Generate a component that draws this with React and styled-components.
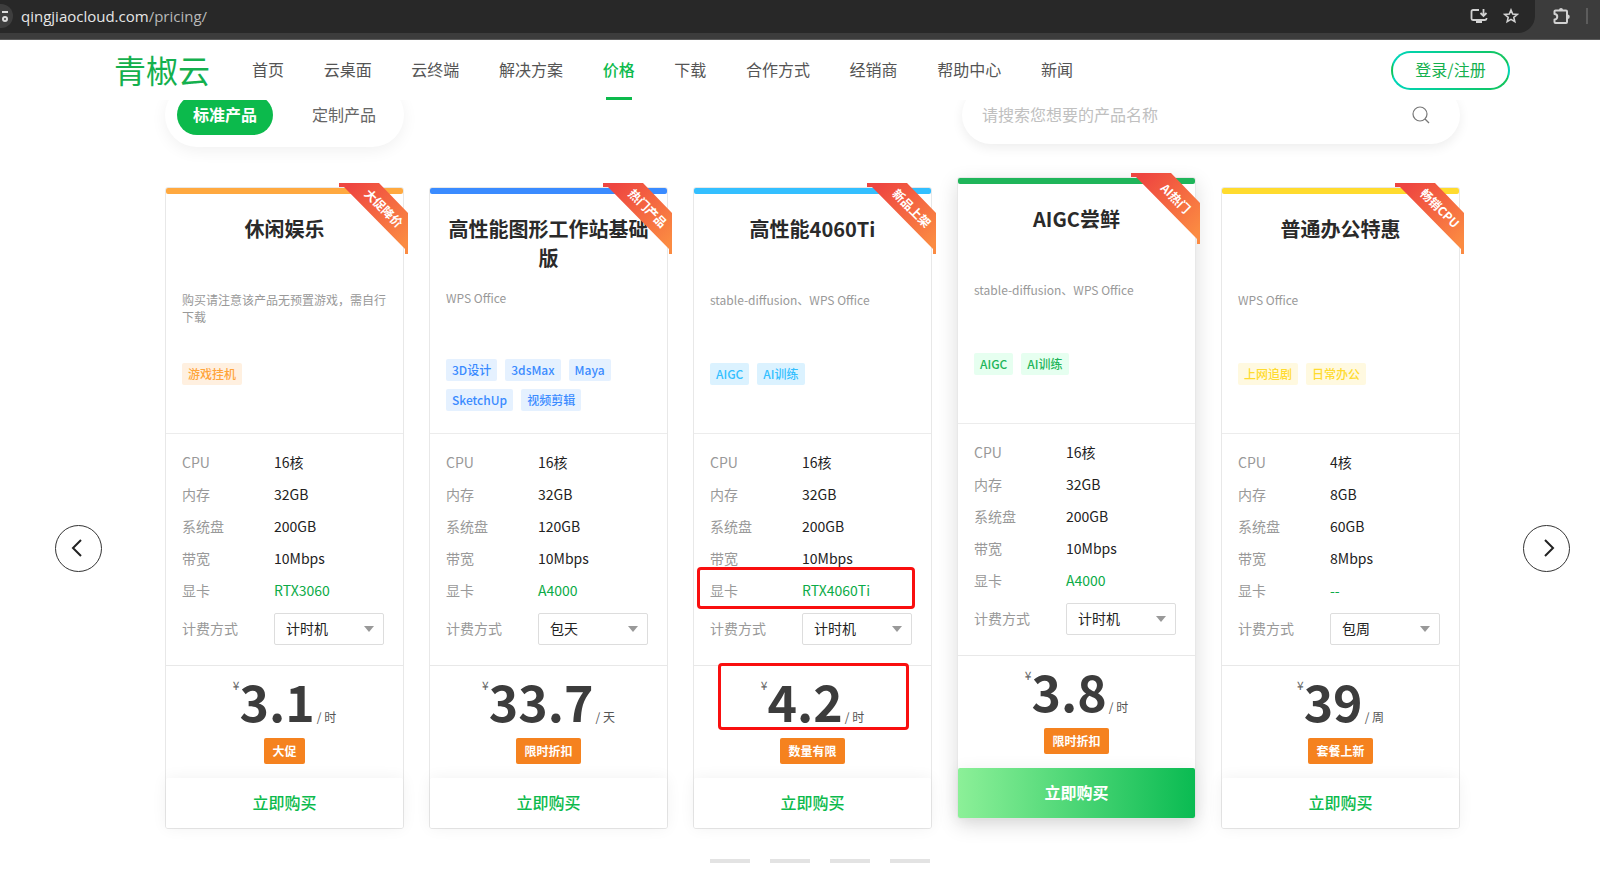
import React, { useState } from "react";
import styled, { createGlobalStyle, css } from "styled-components";

const navItems = [
  "首页",
  "云桌面",
  "云终端",
  "解决方案",
  "价格",
  "下载",
  "合作方式",
  "经销商",
  "帮助中心",
  "新闻",
];

const themes = {
  orange: { bar: "#ffa940", text: "#ffa43a", tint: "#fff0e0" },
  blue: { bar: "#3a8bff", text: "#3a8bff", tint: "#e5f1ff" },
  cyan: { bar: "#33bfff", text: "#33bfff", tint: "#dbf2ff" },
  green: { bar: "#1fb55a", text: "#1fb55a", tint: "#e6fff0" },
  yellow: { bar: "#ffdb2e", text: "#ffdb2e", tint: "#fff9e0" },
};

const products = [
  {
    id: "game",
    theme: "orange",
    title: "休闲娱乐",
    ribbon: "大促降价",
    desc: "购买请注意该产品无预置游戏，需自行下载",
    tags: ["游戏挂机"],
    specs: ["16核", "32GB", "200GB", "10Mbps", "RTX3060"],
    billing: "计时机",
    price: "3.1",
    unit: "时",
    promo: "大促",
  },
  {
    id: "graphics",
    theme: "blue",
    title: "高性能图形工作站基础版",
    ribbon: "热门产品",
    desc: "WPS Office",
    tags: ["3D设计", "3dsMax", "Maya", "SketchUp", "视频剪辑"],
    specs: ["16核", "32GB", "120GB", "10Mbps", "A4000"],
    billing: "包天",
    price: "33.7",
    unit: "天",
    promo: "限时折扣",
  },
  {
    id: "rtx4060ti",
    theme: "cyan",
    title: "高性能4060Ti",
    ribbon: "新品上架",
    desc: "stable-diffusion、WPS Office",
    tags: ["AIGC", "AI训练"],
    specs: ["16核", "32GB", "200GB", "10Mbps", "RTX4060Ti"],
    billing: "计时机",
    price: "4.2",
    unit: "时",
    promo: "数量有限",
    marked: true,
  },
  {
    id: "aigc",
    theme: "green",
    title: "AIGC尝鲜",
    ribbon: "AI热门",
    desc: "stable-diffusion、WPS Office",
    tags: ["AIGC", "AI训练"],
    specs: ["16核", "32GB", "200GB", "10Mbps", "A4000"],
    billing: "计时机",
    price: "3.8",
    unit: "时",
    promo: "限时折扣",
    raised: true,
  },
  {
    id: "office",
    theme: "yellow",
    title: "普通办公特惠",
    ribbon: "畅销CPU",
    desc: "WPS Office",
    tags: ["上网追剧", "日常办公"],
    specs: ["4核", "8GB", "60GB", "8Mbps", "--"],
    billing: "包周",
    price: "39",
    unit: "周",
    promo: "套餐上新",
  },
];

const specLabels = ["CPU", "内存", "系统盘", "带宽", "显卡"];
const billingOptions = ["计时机", "包天", "包周"];

function Ribbon({ id, text }) {
  return (
    <RibbonBox>
      <svg width="69" height="71" viewBox="0 0 69 71" aria-hidden="true">
        <defs>
          <linearGradient id={`ribbon-${id}`} x1="0" y1="0" x2="1" y2="1">
            <stop offset="0.1" stopColor="#ee4540" />
            <stop offset="0.9" stopColor="#fb8b42" />
          </linearGradient>
        </defs>
        <polygon
          points="0,0 40,0 69,30 69,71 66,71 66,66 5,4 0,4"
          fill={`url(#ribbon-${id})`}
        />
      </svg>
      <RibbonText>{text}</RibbonText>
    </RibbonBox>
  );
}

function ProductCard({ item }) {
  const [billing, setBilling] = useState(item.billing);
  const theme = themes[item.theme];
  return (
    <Card $raised={item.raised}>
      <TopBar $color={theme.bar} />
      <Ribbon id={item.id} text={item.ribbon} />
      <Intro>
        <Title>{item.title}</Title>
        <Desc>{item.desc}</Desc>
        <Tags>
          {item.tags.map((tag) => (
            <Tag key={tag} $theme={theme}>
              {tag}
            </Tag>
          ))}
        </Tags>
      </Intro>
      <Specs>
        <SpecList>
          {specLabels.map((label, index) => (
            <SpecRow key={label}>
              <dt>{label}</dt>
              <SpecValue $accent={label === "显卡"}>
                {item.specs[index]}
              </SpecValue>
            </SpecRow>
          ))}
        </SpecList>
        <BillingRow>
          <label htmlFor={`billing-${item.id}`}>计费方式</label>
          <SelectBox>
            <select
              id={`billing-${item.id}`}
              value={billing}
              onChange={(e) => setBilling(e.target.value)}
            >
              {billingOptions.map((option) => (
                <option key={option}>{option}</option>
              ))}
            </select>
          </SelectBox>
        </BillingRow>
      </Specs>
      <PriceBox>
        <Price>
          <Currency>¥</Currency>
          <Amount>{item.price}</Amount>
          <Unit>/ {item.unit}</Unit>
        </Price>
        <Promo>{item.promo}</Promo>
      </PriceBox>
      <BuyButton $raised={item.raised}>立即购买</BuyButton>
      {item.marked && (
        <>
          <GpuMark />
          <PriceMark />
        </>
      )}
    </Card>
  );
}

export default function App() {
  const [tab, setTab] = useState("标准产品");
  return (
    <>
      <GlobalStyle />
      <BrowserBar>
        <AddressBar>
          <SiteInfo>
            <svg width="12" height="14" viewBox="0 0 12 14" aria-hidden="true">
              <path
                d="M0 9h1M6 3h6"
                stroke="#dcdcdc"
                strokeWidth="2"
                fill="none"
              />
              <circle cx="9" cy="10" r="2" stroke="#dcdcdc" strokeWidth="2" fill="none" />
            </svg>
          </SiteInfo>
          <Url>
            qingjiaocloud.com<span>/pricing/</span>
          </Url>
          <BarIcons>
            <svg width="18" height="16" viewBox="0 0 18 16" aria-hidden="true">
              <path
                d="M9 2H3a1.500 1.500 0 0 0-1.500 1.500v7A1.500 1.500 0 0 0 3 12h12a1.500 1.500 0 0 0 1.500-1.500V10M13.500 1v6M10.500 5l3 3 3-3"
                stroke="#d2d2d2"
                strokeWidth="1.800"
                fill="none"
              />
              <path d="M6 12h6v3H6z" fill="#d2d2d2" />
            </svg>
            <svg width="16" height="16" viewBox="0 0 16 16" aria-hidden="true">
              <path
                d="M8 2l1.700 4.100 4.500.400-3.400 2.900 1 4.300L8 11.400l-3.800 2.300 1-4.300L1.800 6.500l4.500-.400z"
                stroke="#d2d2d2"
                strokeWidth="1.600"
                fill="none"
              />
            </svg>
          </BarIcons>
        </AddressBar>
        <Extensions>
          <svg width="17" height="18" viewBox="0 0 17 18" aria-hidden="true">
            <path
              d="M2.500 3.500H13a1 1 0 0 1 1 1V15a1 1 0 0 1-1 1H2.500a1 1 0 0 1-1-1v-2.500a2.600 2.600 0 0 0 0-5.500V4.500a1 1 0 0 1 1-1z"
              stroke="#d2d2d2"
              strokeWidth="2"
              strokeLinejoin="round"
              fill="none"
            />
            <path d="M6 3a2 2 0 0 1 4 0zM14.500 7.500a2 2 0 0 1 0 4.500z" fill="#d2d2d2" />
          </svg>
          <BarDivider />
        </Extensions>
      </BrowserBar>

      <Header>
        <Logo href="#">青椒云</Logo>
        <Nav>
          {navItems.map((name) => (
            <NavLink key={name} href="#" $active={name === "价格"}>
              {name}
            </NavLink>
          ))}
        </Nav>
        <LoginButton>登录/注册</LoginButton>
      </Header>

      <main>
        <Toolbar>
          <Tabs>
            {["标准产品", "定制产品"].map((name) => (
              <TabButton
                key={name}
                $active={tab === name}
                onClick={() => setTab(name)}
              >
                {name}
              </TabButton>
            ))}
          </Tabs>
          <SearchBox>
            <input
              type="text"
              aria-label="搜索产品"
              placeholder="请搜索您想要的产品名称"
            />
            <SearchButton aria-label="搜索">
              <svg width="18" height="18" viewBox="0 0 18 18" aria-hidden="true">
                <circle cx="8" cy="8" r="7" stroke="#777" strokeWidth="1.200" fill="none" />
                <path d="M13 13l4 4" stroke="#777" strokeWidth="1.300" />
              </svg>
            </SearchButton>
          </SearchBox>
        </Toolbar>

        <Carousel>
          <ArrowButton aria-label="上一页">
            <svg width="12" height="18" viewBox="0 0 12 18" aria-hidden="true">
              <path d="M10 1L2 9l8 8" stroke="#222" strokeWidth="2" fill="none" />
            </svg>
          </ArrowButton>
          <CardList>
            {products.map((item) => (
              <ProductCard key={item.id} item={item} />
            ))}
          </CardList>
          <ArrowButton aria-label="下一页">
            <svg width="12" height="18" viewBox="0 0 12 18" aria-hidden="true">
              <path d="M2 1l8 8-8 8" stroke="#222" strokeWidth="2" fill="none" />
            </svg>
          </ArrowButton>
        </Carousel>

        <Pagination>
          {[1, 2, 3, 4].map((page) => (
            <PageDot key={page} aria-label={`第${page}页`} />
          ))}
        </Pagination>
      </main>
    </>
  );
}

const GlobalStyle = createGlobalStyle`
  * {
    box-sizing: border-box;
  }
  body {
    margin: 0;
    background: #fff;
    color: #222;
    font-family: "Noto Sans CJK SC", sans-serif;
    font-size: 14px;
  }
  button, input, select {
    font-family: inherit;
    margin: 0;
  }
  button {
    cursor: pointer;
  }
  h2, p, dl, dd, ul {
    margin: 0;
    padding: 0;
  }
`;

const BrowserBar = styled.div`
  display: flex;
  height: 40px;
  padding-bottom: 6px;
  background: #3c3c3c;
  border-bottom: 1px solid #5c5c5c;
`;

const AddressBar = styled.div`
  flex: 1;
  display: flex;
  align-items: center;
  padding: 0 16px 1px 0;
  background: #282828;
  border-radius: 0 0 17px 0;
`;

const SiteInfo = styled.div`
  display: flex;
  align-items: center;
  justify-content: flex-end;
  width: 13px;
  height: 24px;
  padding-right: 5px;
  background: #3e3e3e;
  border-radius: 0 12px 12px 0;
  overflow: hidden;
  svg {
    flex: none;
  }
`;

const Url = styled.div`
  flex: 1;
  margin-left: 8px;
  color: #e6e6e6;
  font-family: "Open Sans", sans-serif;
  font-size: 15px;
  line-height: 24px;
  span {
    color: #b8b8b8;
  }
`;

const BarIcons = styled.div`
  display: flex;
  align-items: center;
  gap: 15px;
`;

const Extensions = styled.div`
  display: flex;
  align-items: center;
  gap: 16px;
  padding: 0 12px 2px 18px;
`;

const BarDivider = styled.div`
  width: 2px;
  height: 16px;
  background: #5c5c5c;
`;

const Header = styled.header`
  position: sticky;
  top: 0;
  z-index: 10;
  display: flex;
  align-items: center;
  height: 60px;
  padding: 0 90px 0 114px;
  background: #fff;
`;

const Logo = styled.a`
  padding-bottom: 2px;
  color: #14b04e;
  font-size: 32px;
  font-weight: 400;
  line-height: 40px;
  text-decoration: none;
`;

const Nav = styled.nav`
  flex: 1;
  display: flex;
  justify-content: space-between;
  max-width: 821px;
  margin-left: 42px;
`;

const NavLink = styled.a`
  position: relative;
  padding-bottom: 2px;
  color: ${(props) => (props.$active ? "#0cba4c" : "#555")};
  font-size: 16px;
  font-weight: ${(props) => (props.$active ? 500 : 400)};
  line-height: 58px;
  text-decoration: none;
  ${(props) =>
    props.$active &&
    css`
      &::after {
        content: "";
        position: absolute;
        left: 3px;
        right: 3px;
        bottom: 0;
        height: 3px;
        background: #0cba4c;
      }
    `}
`;

const LoginButton = styled.button`
  width: 119px;
  height: 39px;
  margin-left: auto;
  padding: 0 0 2px;
  border: 2px solid transparent;
  border-radius: 20px;
  background-image: linear-gradient(#fff, #fff),
    linear-gradient(90deg, #00d5b8, #12c45c);
  background-clip: padding-box, border-box;
  color: #14b04e;
  font-size: 16px;
`;

const Toolbar = styled.div`
  display: flex;
  align-items: center;
  justify-content: space-between;
  margin-top: -17px;
  padding: 0 140px 0 165px;
`;

const Tabs = styled.div`
  display: flex;
  gap: 23px;
  padding: 12px;
  border-radius: 32px;
  box-shadow: 0 4px 16px rgba(0, 0, 0, 0.06);
`;

const TabButton = styled.button`
  height: 40px;
  padding: 0 16px 2px;
  border: 0;
  border-radius: 20px;
  background: ${(props) => (props.$active ? "#0cba4c" : "transparent")};
  color: ${(props) => (props.$active ? "#fff" : "#666")};
  font-size: 16px;
  font-weight: ${(props) => (props.$active ? 700 : 400)};
`;

const SearchBox = styled.div`
  display: flex;
  align-items: center;
  width: 498px;
  height: 58px;
  padding: 0 23px 0 20px;
  border-radius: 29px;
  box-shadow: 0 4px 12px rgba(0, 0, 0, 0.07);
  input {
    flex: 1;
    padding: 0 0 2px;
    border: 0;
    outline: none;
    background: none;
    color: #333;
    font-size: 16px;
    line-height: 24px;
  }
  input::placeholder {
    color: #c0c0c0;
  }
`;

const SearchButton = styled.button`
  display: flex;
  padding: 7px;
  border: 0;
  background: none;
`;

const Carousel = styled.div`
  display: flex;
  align-items: center;
  gap: 63px;
  padding: 40px 30px 0 55px;
`;

const ArrowButton = styled.button`
  flex: none;
  display: flex;
  align-items: center;
  justify-content: center;
  width: 47px;
  height: 47px;
  margin-top: 80px;
  padding: 0 4px 0 0;
  border: 1px solid #333;
  border-radius: 50%;
  background: #fff;
  &:last-child {
    padding: 0 0 0 4px;
  }
`;

const CardList = styled.div`
  flex: 1;
  display: grid;
  grid-template-columns: repeat(5, 1fr);
  gap: 25px;
`;

const Card = styled.article`
  position: relative;
  display: flex;
  flex-direction: column;
  border: 1px solid #e8e8e8;
  border-radius: 3px;
  background: #fff;
  ${(props) =>
    props.$raised &&
    css`
      top: -10px;
      box-shadow: 0 6px 20px rgba(0, 0, 0, 0.14);
    `}
`;

const TopBar = styled.div`
  height: 6px;
  border-radius: 2px;
  background: ${(props) => props.$color};
`;

const RibbonBox = styled.div`
  position: absolute;
  top: -5px;
  right: -5px;
  width: 69px;
  height: 71px;
  svg {
    display: block;
  }
`;

const RibbonText = styled.span`
  position: absolute;
  top: 25px;
  left: 45px;
  color: #fff;
  font-size: 12px;
  font-weight: 700;
  line-height: 16px;
  white-space: nowrap;
  transform: translate(-50%, -50%) rotate(45deg);
`;

const Intro = styled.div`
  display: flex;
  flex-direction: column;
  height: 240px;
  padding: 20px 16px 14px;
  border-bottom: 1px solid #ececec;
`;

const Title = styled.h2`
  flex: 0 1 77px;
  color: #2a2a2a;
  font-size: 20px;
  font-weight: 700;
  line-height: 29px;
  text-align: center;
`;

const Desc = styled.p`
  flex: 0 1 72px;
  color: #999;
  font-size: 12px;
  line-height: 17px;
`;

const Tags = styled.div`
  flex: none;
  display: flex;
  flex-wrap: wrap;
  gap: 8px;
  padding-bottom: 8px;
`;

const Tag = styled.span`
  padding: 0 6px;
  border-radius: 2px;
  background: ${(props) => props.$theme.tint};
  color: ${(props) => props.$theme.text};
  font-size: 12px;
  font-weight: 500;
  line-height: 22px;
`;

const Specs = styled.div`
  padding: 12px 16px 13px;
  border-bottom: 1px solid #e8e8e8;
  dt,
  label {
    width: 92px;
    color: #999;
  }
`;

const SpecList = styled.dl`
  line-height: 32px;
`;

const SpecRow = styled.div`
  display: flex;
`;

const SpecValue = styled.dd`
  color: ${(props) => (props.$accent ? "#0cab48" : "#222")};
`;

const BillingRow = styled.div`
  display: flex;
  align-items: center;
  height: 46px;
  label {
    padding-bottom: 2px;
  }
`;

const SelectBox = styled.div`
  position: relative;
  width: 110px;
  select {
    width: 100%;
    height: 32px;
    padding: 0 11px 2px;
    border: 1px solid #ddd;
    border-radius: 2px;
    background: #fff;
    color: #222;
    font-size: 14px;
    appearance: none;
  }
  &::after {
    content: "";
    position: absolute;
    top: 13px;
    right: 10px;
    border: 5px solid transparent;
    border-top: 6px solid #999;
    border-bottom: 0;
    pointer-events: none;
  }
`;

const PriceBox = styled.div`
  display: flex;
  flex-direction: column;
  align-items: center;
  padding-bottom: 14px;
`;

const Price = styled.div`
  display: flex;
  align-items: baseline;
  height: 72px;
  color: #3c3c3c;
  line-height: 68px;
`;

const Currency = styled.span`
  align-self: flex-start;
  color: #666;
  font-size: 12px;
  line-height: 38px;
`;

const Amount = styled.span`
  font-size: 50px;
  font-weight: 700;
`;

const Unit = styled.span`
  margin-left: 2px;
  color: #555;
  font-size: 12px;
`;

const Promo = styled.span`
  padding: 0 8px;
  border-radius: 2px;
  background: #f5821f;
  color: #fff;
  font-size: 12px;
  font-weight: 700;
  line-height: 26px;
`;

const BuyButton = styled.button`
  height: 50px;
  padding: 0 0 2px;
  border: 0;
  border-radius: 2px;
  background: #fff;
  box-shadow: 0 0 16px rgba(0, 0, 0, 0.06);
  color: #0cba4c;
  font-size: 16px;
  font-weight: 500;
  ${(props) =>
    props.$raised &&
    css`
      background: linear-gradient(90deg, #8cf098, #0abb52);
      color: #fff;
      font-weight: 700;
    `}
`;

const Mark = styled.div`
  position: absolute;
  border: 3px solid #f90f0f;
  border-radius: 4px;
  pointer-events: none;
`;

const GpuMark = styled(Mark)`
  top: 379px;
  left: 3px;
  right: 16px;
  height: 42px;
`;

const PriceMark = styled(Mark)`
  top: 475px;
  left: 24px;
  right: 22px;
  height: 67px;
`;

const Pagination = styled.div`
  display: flex;
  justify-content: center;
  gap: 20px;
  padding: 30px 140px 14px 180px;
`;

const PageDot = styled.button`
  width: 40px;
  height: 4px;
  padding: 0;
  border: 0;
  background: #e3e3e3;
`;
